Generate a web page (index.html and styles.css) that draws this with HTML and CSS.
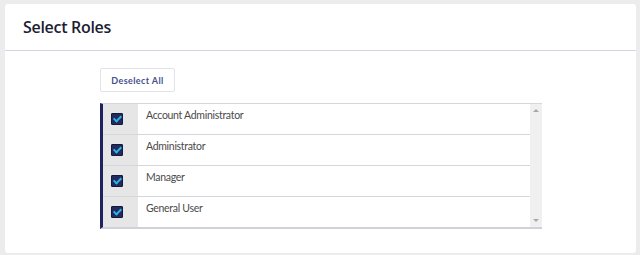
FILE: index.html
```html
<!DOCTYPE html>
<html lang="en">
<head>
    <meta charset="UTF-8">
    <meta name="viewport" content="width=device-width, initial-scale=1.0">
    <title>Select Roles</title>
    <link rel="stylesheet" href="styles.css">
</head>
<body>
    <div class="card">
        <div class="card-header">
            <h1>Select Roles</h1>
        </div>
        <div class="card-body">
            <button type="button" class="btn">Deselect All</button>

            <div class="role-list">
                <div class="roles">
                    <label class="role">
                        <span class="check-cell"><span class="check"></span></span>
                        <span class="role-name">Account Administrator</span>
                    </label>
                    <label class="role">
                        <span class="check-cell"><span class="check"></span></span>
                        <span class="role-name">Administrator</span>
                    </label>
                    <label class="role">
                        <span class="check-cell"><span class="check"></span></span>
                        <span class="role-name">Manager</span>
                    </label>
                    <label class="role">
                        <span class="check-cell"><span class="check"></span></span>
                        <span class="role-name">General User</span>
                    </label>
                </div>
                <div class="scrollbar">
                    <span class="arrow up"></span>
                    <span class="arrow down"></span>
                </div>
            </div>
        </div>
    </div>
</body>
</html>
```

FILE: styles.css
```css
body {
    margin: 0;
    padding: 4px 4px 2px 5px;
    background-color: #ececec;
    font-family: "Open Sans", sans-serif;
}
.card {
    background: white;
    border-radius: 3px;
    height: 249px;
    box-sizing: border-box;
}
.card-header {
    height: 46px;
    border-bottom: 1px solid #d3d3e6;
    display: flex;
    align-items: center;
    padding-left: 18px;
}
h1 {
    margin: 0;
    font-size: 16px;
    font-weight: 600;
    color: #1b1d33;
    letter-spacing: -0.3px;
}
.card-body {
    padding: 17px 0 0 95px;
}
.btn {
    display: block;
    height: 24px;
    width: 75px;
    padding: 0;
    background: white;
    border: 1px solid #e2e2e8;
    border-radius: 2px;
    color: #45508c;
    font-family: "Lato", sans-serif;
    font-size: 9px;
    font-weight: 700;
    letter-spacing: 0.4px;
    cursor: pointer;
}
.role-list {
    margin-top: 11px;
    width: 442px;
    box-sizing: border-box;
    display: flex;
    border-top: 1px solid #d6d6de;
    border-bottom: 2px solid #d0d0da;
    border-left: 3px solid #1f2161;
}
.roles {
    flex: 1;
}
.role {
    display: flex;
    height: 30px;
    border-bottom: 1px solid #d6d6de;
}
.role:last-child {
    border-bottom: none;
}
.check-cell {
    width: 27px;
    padding: 9px 0 0 8px;
    background: #e6e6e6;
}
.check {
    display: block;
    width: 10px;
    height: 10px;
    background: #232a5c;
    border: 1px solid #15183d;
    border-radius: 1px;
    position: relative;
}
.check::after {
    content: "";
    position: absolute;
    left: 3px;
    top: 0;
    width: 3px;
    height: 6px;
    border: solid #2bb6e8;
    border-width: 0 2px 2px 0;
    transform: rotate(45deg);
}
.role-name {
    padding: 5px 0 0 8px;
    font-family: "Lato", sans-serif;
    font-size: 10.5px;
    letter-spacing: -0.3px;
    color: #4a4a4a;
}
.scrollbar {
    width: 12px;
    background: #f0f0f0;
    display: flex;
    flex-direction: column;
    justify-content: space-between;
    align-items: center;
    padding: 5px 0;
}
.arrow {
    width: 0;
    height: 0;
    border-left: 3px solid transparent;
    border-right: 3px solid transparent;
}
.arrow.up {
    border-bottom: 3px solid #a8a8a8;
}
.arrow.down {
    border-top: 3px solid #a8a8a8;
}
```
